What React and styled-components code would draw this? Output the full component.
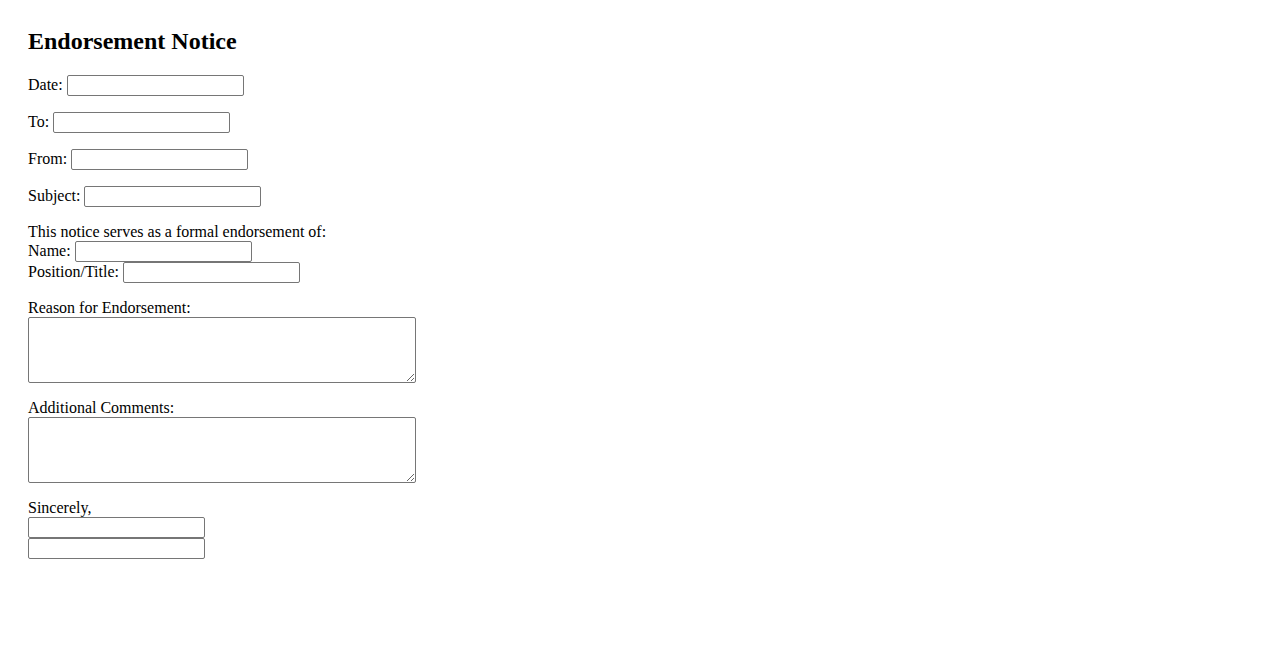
import React from "react";
import styled, { createGlobalStyle } from "styled-components";

const GlobalStyle = createGlobalStyle`
  body {
    margin: 8px;
    background: #ffffff;
    color: #000000;
    font-family: "Liberation Serif", "Times New Roman", serif;
    font-size: 16px;
  }
`;

function App() {
  return (
    <>
      <GlobalStyle />
      <Page>
        <Title>Endorsement Notice</Title>
        <Field>
          <label>Date: </label>
          <TextInput type="text" />
        </Field>
        <Field>
          <label>To: </label>
          <TextInput type="text" />
        </Field>
        <Field>
          <label>From: </label>
          <TextInput type="text" />
        </Field>
        <Field>
          <label>Subject: </label>
          <TextInput type="text" />
        </Field>
        <Field>
          This notice serves as a formal endorsement of:
          <br />
          <label>Name: </label>
          <TextInput type="text" />
          <br />
          <label>Position/Title: </label>
          <TextInput type="text" />
        </Field>
        <Field>
          <label>Reason for Endorsement:</label>
          <TextArea />
        </Field>
        <Field>
          <label>Additional Comments:</label>
          <TextArea />
        </Field>
        <Field>
          Sincerely,
          <br />
          <TextInput type="text" />
          <br />
          <TextInput type="text" />
        </Field>
      </Page>
    </>
  );
}

const Page = styled.div`
  padding: 20px;
`;

const Title = styled.h2`
  margin: 0 0 19.92px;
  font-size: 24px;
  font-weight: 700;
  line-height: normal;
`;

const Field = styled.p`
  margin: 16px 0;
  line-height: normal;
`;

const TextInput = styled.input`
  box-sizing: border-box;
  width: 177px;
  height: 21px;
  margin: 0;
  padding: 1px 2px;
  border: 1px solid #767676;
  border-radius: 2px;
  font-family: "Liberation Sans", Arial, sans-serif;
  font-size: 13.33px;
  vertical-align: baseline;
  background: #ffffff;
`;

const TextArea = styled.textarea`
  display: block;
  box-sizing: border-box;
  width: 388px;
  height: 66px;
  margin: 0;
  padding: 2px;
  border: 1px solid #767676;
  border-radius: 2px;
  font-family: "Liberation Mono", monospace;
  font-size: 13.33px;
`;

export default App;
